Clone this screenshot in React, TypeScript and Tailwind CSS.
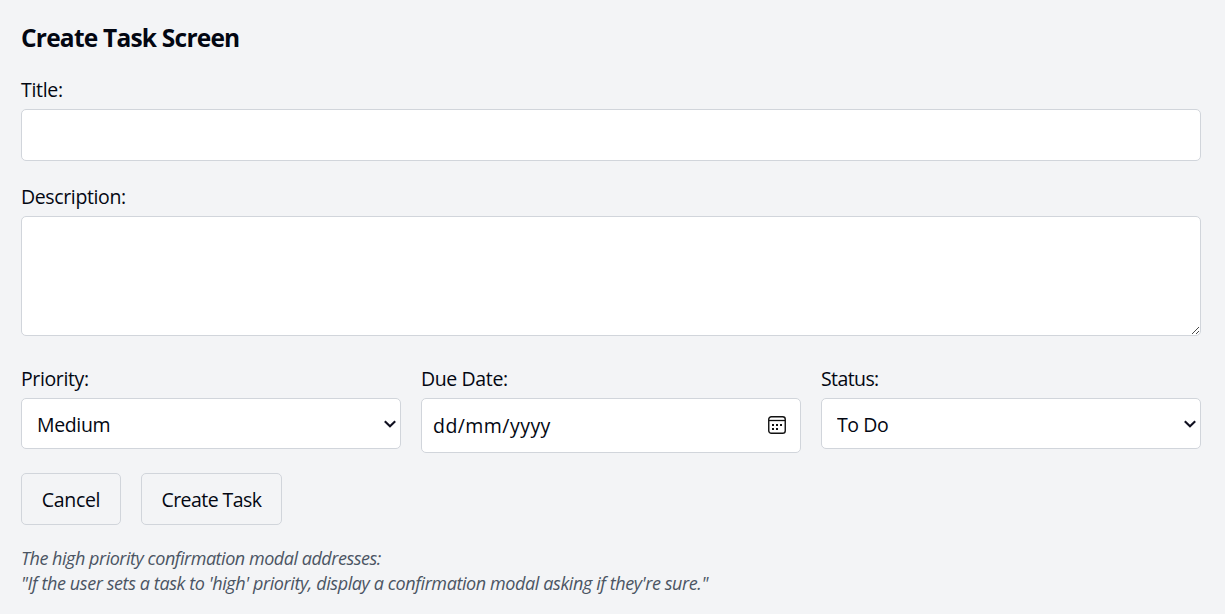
import React from 'react';

const field =
  'block w-full rounded-[5px] border border-[#d1d5db] bg-white text-[19.5px] text-[#030712] outline-none placeholder:text-[#030712] placeholder:opacity-100';
const label = 'block h-[30px] text-[19.5px] leading-[30px] whitespace-nowrap';

function Chevron() {
  return (
    <svg
      className="pointer-events-none absolute right-[4px] top-[20px]"
      width="14"
      height="12"
      viewBox="0 0 14 12"
      fill="none"
      stroke="#101020"
      strokeWidth="2.1"
    >
      <path d="M1.8 3.2 7 8.2 12.2 3.2" />
    </svg>
  );
}

function CalendarIcon() {
  return (
    <svg
      className="pointer-events-none absolute right-[15px] top-[18px]"
      width="18"
      height="18"
      viewBox="0 0 18 18"
      fill="none"
    >
      <rect x="0.75" y="0.75" width="16.5" height="16.5" rx="2.6" stroke="#111" strokeWidth="1.4" />
      <path d="M1 4.5H17" stroke="#111" strokeWidth="1.3" />
      <g fill="#111">
        <rect x="4" y="8" width="2" height="2" />
        <rect x="8" y="8" width="2" height="2" />
        <rect x="12" y="8" width="2" height="2" />
        <rect x="4" y="12" width="2" height="2" />
        <rect x="8" y="12" width="2" height="2" />
      </g>
    </svg>
  );
}

export default function App() {
  return (
    <main className="h-[614px] overflow-hidden bg-[#f3f4f6] pl-[21px] pr-[24px] pt-[20px] font-['Open_Sans','Noto_Sans',sans-serif] text-[#030712]">
      <h1 className="h-[35px] text-[24.5px] leading-[35px] font-bold whitespace-nowrap">
        <span className="tracking-[-0.78px]">Create Task Screen</span>
      </h1>

      <form onSubmit={(e) => e.preventDefault()}>
        <div className="mt-[20px]">
          <label htmlFor="title" className={label}>
            <span className="tracking-[-0.3px]">Title:</span>
          </label>
          <input id="title" className={`${field} mt-[4px] h-[52px] px-[11px]`} />
        </div>

        <div className="mt-[21px]">
          <label htmlFor="description" className={label}>
            <span className="tracking-[-0.37px]">Description:</span>
          </label>
          <div className="relative mt-[4px]">
            <textarea id="description" className={`${field} h-[120px] resize-none px-[11px] py-[10px]`} />
            <svg
              className="pointer-events-none absolute right-[2px] bottom-[2px]"
              width="7"
              height="7"
              viewBox="0 0 7 7"
              fill="#4a4a4a"
              shapeRendering="crispEdges"
            >
              <path d="M0 6h1v1H0zM1 5h1v1H1zM2 4h1v1H2zM3 3h1v1H3zM4 2h1v1H4zM5 1h1v1H5zM6 0h1v1H6zM4 6h1v1H4zM5 5h1v1H5zM6 4h1v1H6z" />
            </svg>
          </div>
        </div>

        <div className="mt-[28px] grid h-[89px] grid-cols-3 items-start gap-5">
          <div>
            <label htmlFor="priority" className={label}>
              <span className="tracking-[-0.38px]">Priority:</span>
            </label>
            <div className="relative mt-[4px]">
              <select
                id="priority"
                defaultValue="Medium"
                className={`${field} h-[51px] appearance-none pt-[2px] pl-[15px] tracking-[-0.35px]`}
              >
                <option>Low</option>
                <option>Medium</option>
                <option>High</option>
              </select>
              <Chevron />
            </div>
          </div>
          <div>
            <label htmlFor="due" className={label}>
              <span className="tracking-[-0.38px]">Due Date:</span>
            </label>
            <div className="relative mt-[4px]">
              <input
                id="due"
                placeholder="dd/mm/yyyy"
                className={`${field} h-[55px] pl-[11px] tracking-[0.45px]`}
              />
              <CalendarIcon />
            </div>
          </div>
          <div>
            <label htmlFor="status" className={label}>
              <span className="tracking-[-0.6px]">Status:</span>
            </label>
            <div className="relative mt-[4px]">
              <select
                id="status"
                defaultValue="To Do"
                className={`${field} h-[51px] appearance-none pt-[2px] pl-[15px] tracking-[-0.45px]`}
              >
                <option>To Do</option>
                <option>In Progress</option>
                <option>Done</option>
              </select>
              <Chevron />
            </div>
          </div>
        </div>

        <div className="mt-[20px] flex gap-5 text-[19.5px]">
          <button
            type="button"
            className="h-[52px] w-[100px] rounded-[5px] border border-[#d1d5db] pt-[2px] whitespace-nowrap tracking-[-0.3px]"
          >
            Cancel
          </button>
          <button
            type="submit"
            className="h-[52px] w-[141px] rounded-[5px] border border-[#d1d5db] pt-[2px] whitespace-nowrap tracking-[-0.55px]"
          >
            Create Task
          </button>
        </div>
      </form>

      <p className="mt-[21px] text-[18px] leading-[25px] whitespace-nowrap text-[#4b5563] italic">
        <span className="tracking-[-0.47px]">The high priority confirmation modal addresses:</span>
        <br />
        <span className="tracking-[-0.4px]">
          "If the user sets a task to 'high' priority, display a confirmation modal asking if they're sure."
        </span>
      </p>
    </main>
  );
}
